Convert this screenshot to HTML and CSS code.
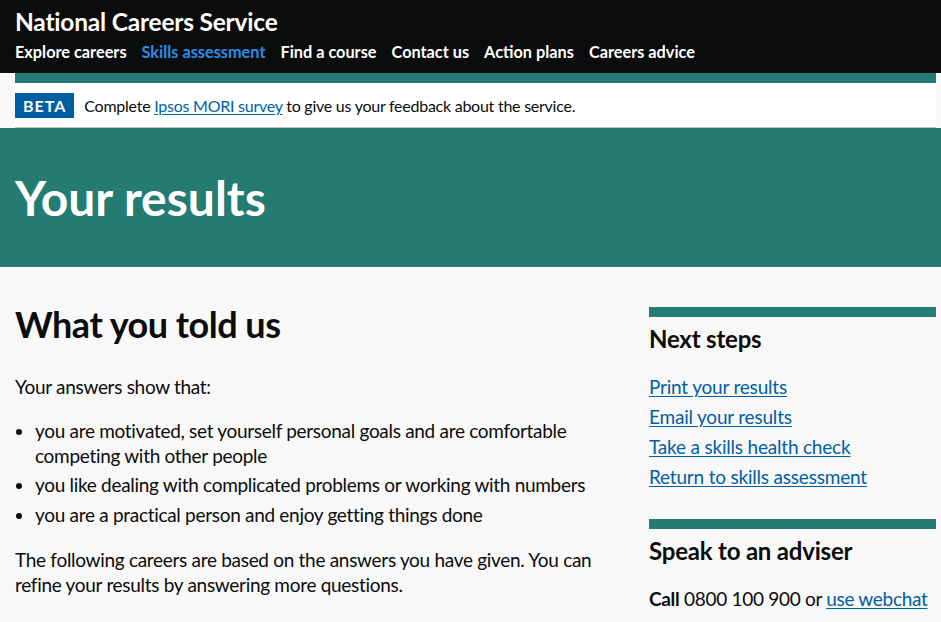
FILE: index.html
```html
<!DOCTYPE html>
<html lang="en">
<head>
<meta charset="utf-8">
<title>Your results - National Careers Service</title>
<link rel="stylesheet" href="styles.css">
</head>
<body>
<header class="site-header">
  <div class="container">
    <div class="service-name">National Careers Service</div>
    <nav>
      <ul class="nav-list">
        <li><a href="#" class="nav-link">Explore careers</a></li>
        <li><a href="#" class="nav-link nav-link--active">Skills assessment</a></li>
        <li><a href="#" class="nav-link">Find a course</a></li>
        <li><a href="#" class="nav-link">Contact us</a></li>
        <li><a href="#" class="nav-link">Action plans</a></li>
        <li><a href="#" class="nav-link">Careers advice</a></li>
      </ul>
    </nav>
  </div>
</header>
<div class="container">
  <div class="phase-banner">
    <strong class="phase-tag">BETA</strong>
    <span class="phase-text">Complete <a href="#" class="link">Ipsos MORI survey</a> to give us your feedback about the service.</span>
  </div>
</div>
<div class="hero">
  <div class="container">
    <h1 class="hero-title">Your results</h1>
  </div>
</div>
<main class="main">
  <div class="container grid">
    <div class="col-main">
      <h2 class="heading-xl">What you told us</h2>
      <p class="body body--lead">Your answers show that:</p>
      <ul class="bullets">
        <li>you are motivated, set yourself personal goals and are comfortable competing with other people</li>
        <li>you like dealing with complicated problems or working with numbers</li>
        <li>you are a practical person and enjoy getting things done</li>
      </ul>
      <p class="body">The following careers are based on the answers you have given. You can refine your results by answering more questions.</p>
    </div>
    <aside class="col-side">
      <section class="side-block">
        <h2 class="heading-m">Next steps</h2>
        <ul class="side-links">
          <li><a href="#" class="link">Print your results</a></li>
          <li><a href="#" class="link">Email your results</a></li>
          <li><a href="#" class="link">Take a skills health check</a></li>
          <li><a href="#" class="link">Return to skills assessment</a></li>
        </ul>
      </section>
      <section class="side-block">
        <h2 class="heading-m">Speak to an adviser</h2>
        <p class="body body--nowrap"><strong>Call</strong> 0800 100 900 or <a href="#" class="link">use webchat</a></p>
      </section>
    </aside>
  </div>
</main>
</body>
</html>
```
FILE: styles.css
```css
* { box-sizing: border-box; }
html, body { margin: 0; padding: 0; }
body {
  font-family: Lato, "Noto Sans", Arial, sans-serif;
  color: #0b0c0c;
  background: #f8f8f8;
}
.container {
  width: 921px;
  margin-left: 15px;
}
.site-header {
  background: #0b0c0c;
  color: #fff;
  height: 73px;
  padding-top: 7px;
}
.service-name {
  font-size: 24.5px;
  font-weight: 700;
  line-height: 30px;
  letter-spacing: -0.2px;
}
.nav-list {
  list-style: none;
  margin: 3px 0 0;
  padding: 0;
  display: flex;
  gap: 15px;
}
.nav-link {
  color: #fff;
  font-size: 16.3px;
  font-weight: 700;
  line-height: 24px;
  text-decoration: none;
}
.nav-link--active { color: #2a8ee8; }
.phase-banner {
  background: #fff;
  border-top: 10px solid #237b71;
  border-bottom: 1px solid #bfc1c3;
  padding: 10px 0 9px;
  display: flex;
  align-items: center;
  gap: 10px;
}
.phase-tag {
  background: #005ea5;
  color: #fff;
  font-size: 16px;
  font-weight: 700;
  letter-spacing: 1px;
  line-height: 25px;
  padding: 0 8px;
}
.phase-text {
  font-size: 16px;
  line-height: 25px;
  letter-spacing: -0.25px;
}
.link { color: #005ea5; text-decoration: underline; text-underline-offset: 2px; }
.hero {
  background: #237b71;
  color: #fff;
  height: 139px;
  display: flex;
  align-items: center;
}
.hero-title {
  margin: 0;
  font-size: 48px;
  font-weight: 700;
  line-height: 50px;
}
.main {
  padding-top: 40px;
  padding-bottom: 40px;
}
.grid {
  display: grid;
  grid-template-columns: 1fr 287px;
  column-gap: 34px;
}
.heading-xl {
  margin: -3px 0 30px;
  font-size: 36px;
  line-height: 40px;
  font-weight: 700;
  letter-spacing: -0.5px;
}
.body {
  margin: 0 0 15px;
  font-size: 19px;
  line-height: 25px;
  letter-spacing: -0.3px;
}
.body--lead { margin-bottom: 20px; }
.body--nowrap { white-space: nowrap; }
.bullets {
  margin: -1px 0 20px;
  padding-left: 20px;
  font-size: 19px;
  line-height: 25px;
  letter-spacing: -0.3px;
}
.bullets li { margin-bottom: 5px; }
.bullets li:first-child { margin-bottom: 4px; }
.side-block {
  border-top: 10px solid #237b71;
  margin-bottom: 30px;
}
.heading-m {
  margin: 7px 0 20px;
  font-size: 24px;
  line-height: 30px;
  font-weight: 700;
  letter-spacing: -0.2px;
}
.side-links {
  list-style: none;
  margin: 0;
  padding: 0;
  font-size: 19px;
  line-height: 25px;
  letter-spacing: -0.2px;
}
.side-links li { margin-bottom: 5px; }
```
